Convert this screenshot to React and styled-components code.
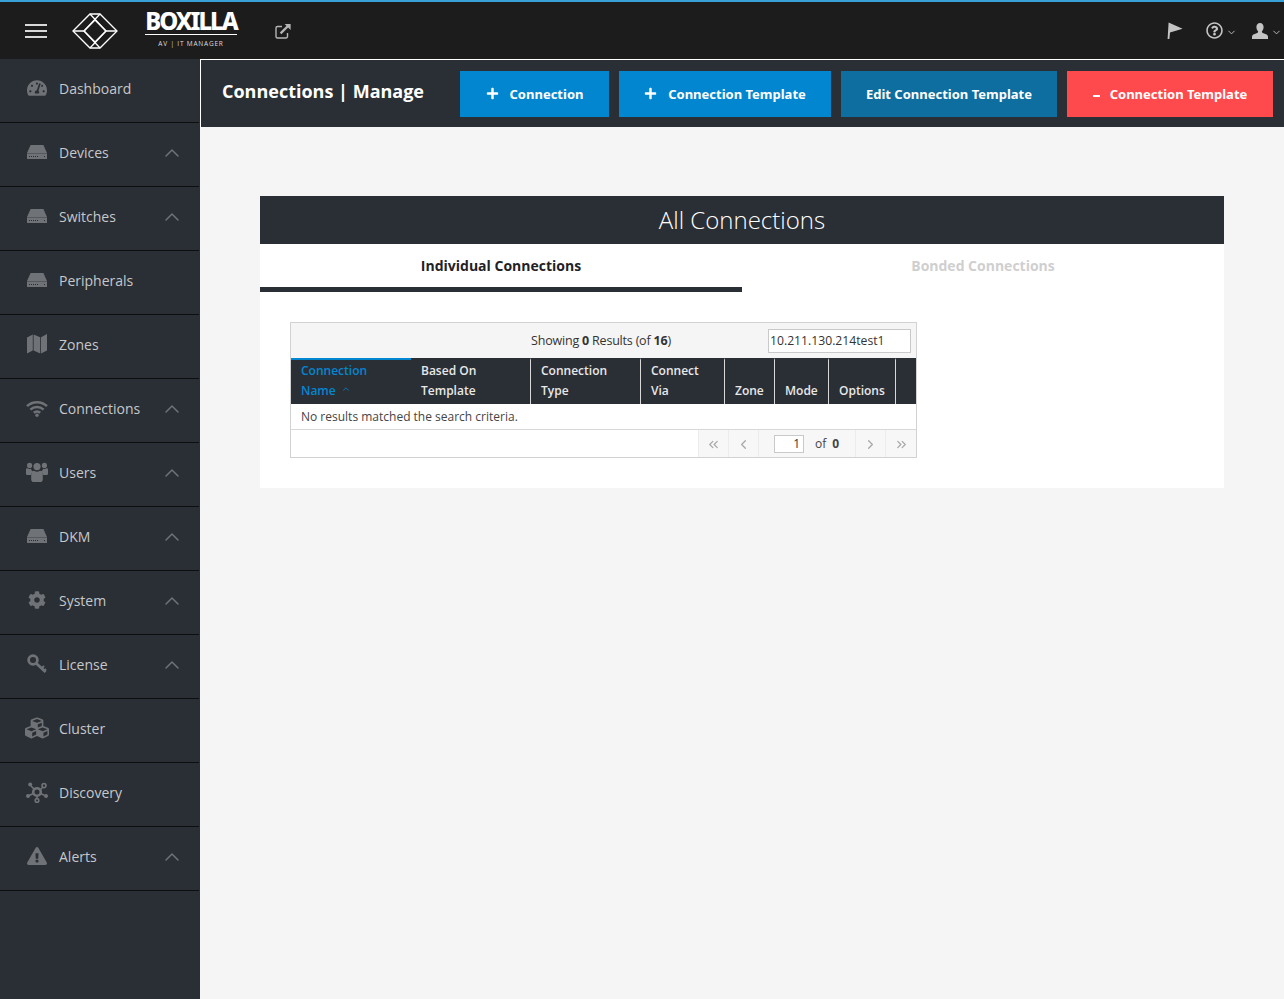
import React from 'react'
import styled, { createGlobalStyle } from 'styled-components'
import { FaTachometerAlt, FaCog, FaCubes, FaExclamationTriangle, FaRegQuestionCircle, FaPlus } from 'react-icons/fa'
import { FiChevronUp, FiChevronDown, FiChevronLeft, FiChevronRight, FiChevronsLeft, FiChevronsRight } from 'react-icons/fi'

const GlobalStyle = createGlobalStyle`
  html, body { margin: 0; padding: 0; background: #f5f5f5; }
  body { font-family: "Open Sans", "Noto Sans", sans-serif; }
  * { box-sizing: border-box; }
`

const Page = styled.div`
  width: 1284px;
  height: 999px;
  overflow: hidden;
  display: flex;
  flex-direction: column;
`

const TopBar = styled.header`
  height: 59px;
  flex: none;
  border-top: 2px solid #39a0d8;
  background: #1c1c1c;
  display: flex;
  align-items: center;
  color: #c8c8c8;
`

const Burger = styled.div`
  width: 22px;
  margin-left: 25px;
  display: flex;
  flex-direction: column;
  gap: 4px;
  span { height: 2px; background: #d8d8d8; display: block; }
`

const LogoMark = styled.svg`
  width: 46px;
  height: 36px;
  margin-left: 25px;
`

const Wordmark = styled.div`
  margin-left: 27px;
  width: 92px;
  margin-top: -4px;
  color: #fff;
  display: flex;
  flex-direction: column;
  align-items: center;
`

const WordmarkName = styled.div`
  font-family: "Noto Sans", sans-serif;
  font-weight: 800;
  font-size: 24px;
  line-height: 23px;
  letter-spacing: -2px;
  width: 100%;
  text-align: center;
  white-space: nowrap;
  border-bottom: 1px solid #fff;
  padding-bottom: 2px;
`

const WordmarkSub = styled.div`
  font-size: 6.5px;
  line-height: 8px;
  margin-top: 5px;
  letter-spacing: 0.8px;
  color: #ddd;
`

const ExternalLink = styled.svg`
  margin-left: 38px;
  width: 16px;
  height: 16px;
`

const TopRight = styled.div`
  margin-left: auto;
  margin-right: 2px;
  display: flex;
  align-items: center;
  color: #c4c4c4;
`

const TopItem = styled.div`
  display: flex;
  align-items: center;
  margin-left: ${p => p.$gap}px;
  font-size: 17px;
`

const Caret = styled(FiChevronDown)`
  font-size: 11px;
  margin-left: 3px;
  margin-top: 3px;
`

const Body = styled.div`
  flex: 1;
  display: flex;
  min-height: 0;
`

const Sidebar = styled.nav`
  width: 200px;
  flex: none;
  background: #2a2e35;
  border-right: 1px solid #2a2e35;
`

const NavRow = styled.div`
  height: 64px;
  border-bottom: 1px solid #0d0e10;
  display: flex;
  align-items: center;
  padding: 0 15px 5px 25px;
  color: #c6c8ca;
  font-size: 14px;
`

const NavIcon = styled.span`
  width: 24px;
  height: 24px;
  margin-right: 10px;
  display: flex;
  align-items: center;
  justify-content: center;
  color: #6f7276;
  font-size: ${p => p.$size || 20}px;
`

const NavChevron = styled(FiChevronUp)`
  margin-left: auto;
  margin-top: 2px;
  color: #6f7276;
  font-size: 24px;
  stroke-width: 1.5;
`

const Main = styled.main`
  flex: 1;
  min-width: 0;
  background: #f5f5f5;
`

const TitleBar = styled.div`
  height: 68px;
  background: #2a2e35;
  border-top: 1px solid #fff;
  border-left: 1px solid #fff;
  display: flex;
  align-items: center;
  padding-left: 21px;
`

const PageTitle = styled.h1`
  margin: 0 36px 5px 0;
  width: 202px;
  color: #fff;
  font-size: 18px;
  font-weight: 700;
  white-space: nowrap;
`

const Actions = styled.div`
  display: flex;
  gap: 10px;
`

const ActionButton = styled.button`
  height: 46px;
  width: ${p => p.$width}px;
  background: ${p => p.$bg};
  border: none;
  padding: 0;
  color: #fff;
  font-family: "Noto Sans", sans-serif;
  font-weight: 700;
  font-size: 13px;
  display: flex;
  align-items: center;
  justify-content: center;
  gap: ${p => p.$gap || 11}px;
`

const Minus = styled.span`
  width: 7px;
  height: 2px;
  margin-top: 5px;
  background: #fff;
`

const Content = styled.div`
  padding: 69px 60px 0;
`

const Card = styled.section`
  background: #fff;
  height: 292px;
`

const CardHeader = styled.h2`
  margin: 0;
  height: 48px;
  background: #2a2e35;
  color: #fff;
  font-size: 24px;
  font-weight: 300;
  line-height: 48px;
  text-align: center;
`

const Tabs = styled.div`
  display: flex;
`

const Tab = styled.div`
  width: 50%;
  height: 48px;
  padding-top: 12px;
  text-align: center;
  font-size: 14px;
  line-height: 20px;
  font-weight: 700;
  color: ${p => (p.$active ? '#1f2227' : '#cfcfcf')};
  border-bottom: 5px solid ${p => (p.$active ? '#2a2e35' : 'transparent')};
`

const TableWrap = styled.div`
  margin: 30px 0 0 30px;
  width: 627px;
  border: 1px solid #d2d2d2;
`

const ResultBar = styled.div`
  height: 35px;
  background: #f5f5f5;
  display: flex;
  align-items: center;
  color: #333;
  font-size: 12.5px;
  letter-spacing: -0.2px;
`

const ResultText = styled.div`
  width: 477px;
  padding-left: 143px;
  text-align: center;
  b { font-weight: 700; }
`

const SearchInput = styled.input`
  width: 143px;
  height: 24px;
  border: 1px solid #c9c9c9;
  background: #fff;
  padding: 0 1px;
  font-family: inherit;
  font-size: 12.2px;
  letter-spacing: 0;
  color: #333;
  outline: none;
`

const HeadRow = styled.div`
  height: 46px;
  display: flex;
  background: #2a2e35;
`

const HeadCell = styled.div`
  width: ${p => p.$width}px;
  flex: none;
  padding: 3px 0 3px 10px;
  border-right: ${p => (p.$open ? 'none' : '1px solid #d8d8d8')};
  border-top: 2px solid ${p => (p.$sorted ? '#0386d0' : '#2a2e35')};
  display: flex;
  flex-direction: column;
  justify-content: flex-end;
  color: ${p => (p.$sorted ? '#0386d0' : '#e8e8e8')};
  font-size: 12px;
  font-weight: 600;
  line-height: 20px;
`

const SortCaret = styled(FiChevronUp)`
  font-size: 10px;
  margin-left: 5px;
  vertical-align: 1px;
`

const EmptyRow = styled.div`
  height: 26px;
  padding-left: 10px;
  background: #fff;
  border-bottom: 1px solid #d8d8d8;
  color: #444;
  font-size: 12px;
  line-height: 25px;
`

const Pager = styled.div`
  height: 27px;
  display: flex;
  justify-content: flex-end;
  background: #fff;
`

const PagerButton = styled.div`
  width: ${p => p.$width || 30}px;
  padding-top: 2px;
  display: flex;
  align-items: center;
  justify-content: center;
  color: #a8a8a8;
  background: #f7f7f7;
  border-left: 1px solid #ececec;
  font-size: 15px;
`

const PagerInfo = styled.div`
  width: 97px;
  background: #f7f7f7;
  border-left: 1px solid #ececec;
  padding-left: 15px;
  display: flex;
  align-items: center;
  color: #444;
  font-size: 12px;
  b { margin-left: 6px; }
`

const PageBox = styled.div`
  width: 30px;
  height: 18px;
  background: #fff;
  border: 1px solid #c9c9c9;
  margin-right: 11px;
  padding-right: 3px;
  text-align: right;
  line-height: 16px;
  color: #333;
`

const iconColor = '#6f7276'

// solid rack unit icon, used by several nav rows
const RackIcon = () => (
  <svg width="20" height="14" viewBox="0 0 20 14">
    <path d="M3.6 0h12.8L20 8v6H0V8z" fill={iconColor} />
    <path d="M0 8.5h20" stroke="#565a60" strokeWidth="1" />
    <path d="M2 11h1v1H2zM4 11h1v1H4zM6 11h1v1H6zM8 11h1v1H8zM10 11h1v1h-1zM17 11h1v1h-1z" fill="#2a2e35" />
  </svg>
)

const MapIcon = () => (
  <svg width="20" height="20" viewBox="0 0 20 20" fill={iconColor}>
    <path d="M0 3.500 5.800.4v16.200L0 19.600zM6.600.4l6.600 2.900v16.300l-6.600-3zM14 3.300 20 0v16.400l-6 3.200z" />
  </svg>
)

const WifiIcon = () => (
  <svg width="22" height="17" viewBox="0 0 22 17" fill="none" stroke={iconColor} strokeWidth="2.5">
    <path d="M1 6.200a14.400 14.400 0 0 1 20 0" />
    <path d="M4.400 9.600a9.600 9.600 0 0 1 13.200 0" />
    <path d="M7.800 12.800a4.800 4.800 0 0 1 6.400 0" />
    <circle cx="11" cy="15.200" r="1.700" fill={iconColor} stroke="none" />
  </svg>
)

const UsersIcon = () => (
  <svg width="22" height="20" viewBox="0 0 22 20" fill={iconColor}>
    <circle cx="11" cy="4.600" r="3.600" />
    <circle cx="3.600" cy="3.400" r="2.600" />
    <circle cx="18.400" cy="3.400" r="2.600" />
    <path d="M0 7.400c0-1 .8-1.400 1.500-1.200 1 .7 2.400.9 3.300.6.6 1.400 1.400 2.300 2.300 3-1.200.8-2 2-2.200 3.200H1.600C.6 13 0 12.300 0 11.400zM22 7.400c0-1-.8-1.400-1.500-1.200-1 .7-2.400.9-3.300.6-.6 1.400-1.400 2.300-2.300 3 1.200.8 2 2 2.200 3.200h3.300c1 0 1.600-.7 1.600-1.600z" />
    <path d="M5.200 12.200c0-1.900 1.400-3.400 3-3.400 1.700 1.200 3.900 1.200 5.600 0 1.600 0 3 1.500 3 3.400v5.200c0 1.400-1 2.600-2.400 2.600H7.600c-1.400 0-2.400-1.200-2.400-2.600z" />
  </svg>
)

const KeyIcon = () => (
  <svg width="20" height="20" viewBox="0 0 20 20" fill="none" stroke={iconColor}>
    <circle cx="6" cy="6" r="4.400" strokeWidth="2.700" />
    <path d="M9.400 9.400 18.600 18" strokeWidth="2.800" />
    <path d="M14.400 14.400l2.600-2.400M17 16.800l2-1.800" strokeWidth="2" />
  </svg>
)

const DiscoveryIcon = () => (
  <svg width="22" height="22" viewBox="0 0 22 22" fill="none" stroke={iconColor} strokeWidth="1.6">
    <circle cx="11" cy="11" r="3.800" strokeWidth="2.600" />
    <path d="M8.400 8.400 5 5M14 9l3-3M7.600 12.500 3 14.500M14.400 12.500l4 1.800M11 14.600V18" />
    <circle cx="4.200" cy="3.600" r="2" fill={iconColor} stroke="none" />
    <circle cx="18" cy="4.600" r="2" />
    <circle cx="2" cy="15" r="2" fill={iconColor} stroke="none" />
    <circle cx="20" cy="15" r="2" fill={iconColor} stroke="none" />
    <circle cx="11" cy="19.400" r="1.800" />
  </svg>
)

const navItems = [
  { label: 'Dashboard', icon: <FaTachometerAlt /> },
  { label: 'Devices', icon: <RackIcon />, open: true },
  { label: 'Switches', icon: <RackIcon />, open: true },
  { label: 'Peripherals', icon: <RackIcon /> },
  { label: 'Zones', icon: <MapIcon /> },
  { label: 'Connections', icon: <WifiIcon />, open: true },
  { label: 'Users', icon: <UsersIcon />, open: true },
  { label: 'DKM', icon: <RackIcon />, open: true },
  { label: 'System', icon: <FaCog />, open: true, size: 18 },
  { label: 'License', icon: <KeyIcon />, open: true },
  { label: 'Cluster', icon: <FaCubes />, size: 24 },
  { label: 'Discovery', icon: <DiscoveryIcon /> },
  { label: 'Alerts', icon: <FaExclamationTriangle />, open: true },
]

const columns = [
  { width: 120, lines: ['Connection', 'Name'], sorted: true, open: true },
  { width: 120, lines: ['Based On', 'Template'] },
  { width: 110, lines: ['Connection', 'Type'] },
  { width: 84, lines: ['Connect', 'Via'] },
  { width: 50, lines: ['Zone'] },
  { width: 54, lines: ['Mode'] },
  { width: 67, lines: ['Options'] },
  { width: 20, lines: [], open: true },
]

export default function App() {
  return (
    <Page>
      <GlobalStyle />
      <TopBar>
        <Burger><span /><span /><span /></Burger>
        <LogoMark viewBox="0 0 46 36" fill="none" stroke="#fff" strokeWidth="1.3">
          <path d="M1 18 18 1h10l17 17-17 17H18z" />
          <path d="M12 18 23 7l11 11-11 11z" />
          <path d="M18 1l16 17M28 1 12 18M12 18l16 17M34 18 18 35M1 18h11M34 18h11" />
        </LogoMark>
        <Wordmark>
          <WordmarkName>BOXILLA</WordmarkName>
          <WordmarkSub>AV | IT MANAGER</WordmarkSub>
        </Wordmark>
        <ExternalLink viewBox="0 0 16 16" fill="none" stroke="#b5b5b5">
          <path d="M7 3.500H2.500a1.500 1.500 0 0 0-1.500 1.500v8.500A1.500 1.500 0 0 0 2.500 15H11a1.500 1.500 0 0 0 1.500-1.500V10" strokeWidth="1.400" />
          <path d="M5.600 10.400 13.400 2.600" strokeWidth="2.200" />
          <path d="M9.600 1h6v6z" fill="#b5b5b5" stroke="none" />
        </ExternalLink>
        <TopRight>
          <TopItem $gap={0}>
            <svg width="16" height="17" viewBox="0 0 16 17">
              <path d="M1.600.5 15.600 6.800 3 10.400 2.400 17H.6z" fill="#c4c4c4" />
            </svg>
          </TopItem>
          <TopItem $gap={23}><FaRegQuestionCircle /><Caret /></TopItem>
          <TopItem $gap={15}>
            <svg width="16" height="16" viewBox="0 0 16 16">
              <path d="M8 0c2.300 0 3.600 1.800 3.600 4 0 1.700-.7 3.300-1.700 4.200 0 1.200.3 1.600 1.600 2.100 2.500.9 4.500 1.600 4.500 3.400V16H0v-2.300c0-1.800 2-2.500 4.500-3.400 1.300-.5 1.600-.9 1.600-2.100C5.100 7.300 4.400 5.700 4.400 4 4.400 1.800 5.700 0 8 0z" fill="#c4c4c4" />
            </svg>
            <Caret />
          </TopItem>
        </TopRight>
      </TopBar>
      <Body>
        <Sidebar>
          {navItems.map(item => (
            <NavRow key={item.label}>
              <NavIcon $size={item.size}>{item.icon}</NavIcon>
              {item.label}
              {item.open && <NavChevron />}
            </NavRow>
          ))}
        </Sidebar>
        <Main>
          <TitleBar>
            <PageTitle>Connections | Manage</PageTitle>
            <Actions>
              <ActionButton $width={149} $bg="#0386d0"><FaPlus size={13} />Connection</ActionButton>
              <ActionButton $width={212} $bg="#0386d0"><FaPlus size={13} />Connection Template</ActionButton>
              <ActionButton $width={216} $bg="#0d6e9f">Edit Connection Template</ActionButton>
              <ActionButton $width={206} $bg="#ff4a4d" $gap={10}><Minus />Connection Template</ActionButton>
            </Actions>
          </TitleBar>
          <Content>
            <Card>
              <CardHeader>All Connections</CardHeader>
              <Tabs>
                <Tab $active>Individual Connections</Tab>
                <Tab>Bonded Connections</Tab>
              </Tabs>
              <TableWrap>
                <ResultBar>
                  <ResultText>Showing <b>0</b> Results (of <b>16</b>)</ResultText>
                  <SearchInput readOnly value="10.211.130.214test1" />
                </ResultBar>
                <HeadRow>
                  {columns.map((col, i) => (
                    <HeadCell key={i} $width={col.width} $sorted={col.sorted} $open={col.open}>
                      {col.lines.map((line, j) => (
                        <div key={line}>
                          {line}
                          {col.sorted && j === 1 && <SortCaret />}
                        </div>
                      ))}
                    </HeadCell>
                  ))}
                </HeadRow>
                <EmptyRow>No results matched the search criteria.</EmptyRow>
                <Pager>
                  <PagerButton><FiChevronsLeft /></PagerButton>
                  <PagerButton><FiChevronLeft /></PagerButton>
                  <PagerInfo><PageBox>1</PageBox>of <b>0</b></PagerInfo>
                  <PagerButton><FiChevronRight /></PagerButton>
                  <PagerButton $width={31}><FiChevronsRight /></PagerButton>
                </Pager>
              </TableWrap>
            </Card>
          </Content>
        </Main>
      </Body>
    </Page>
  )
}
